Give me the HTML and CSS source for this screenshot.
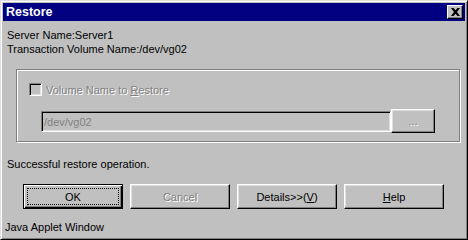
FILE: index.html
```html
<!DOCTYPE html>
<html>
<head>
<meta charset="utf-8">
<link rel="stylesheet" href="styles.css">
</head>
<body>
<div class="window">
  <div class="titlebar">
    <span class="title">Restore</span>
    <span class="close"><svg width="9" height="8" viewBox="0 0 9 8"><path d="M0 0h2.5l2 2.2 2-2.2H9L6 4l3 4H6.5l-2-2.2-2 2.2H0l3-4z" fill="#000"/></svg></span>
  </div>
  <div class="content">
    <div class="info">Server Name:Server1</div>
    <div class="info">Transaction Volume Name:/dev/vg02</div>
    <div class="group">
      <div class="check"><span class="box"></span><span class="dis">Volume Name to <u>R</u>estore</span></div>
      <div class="row">
        <div class="field">/dev/vg02</div>
        <div class="btn browse"><span class="dis">...</span></div>
      </div>
    </div>
    <div class="status">Successful restore operation.</div>
    <div class="buttons">
      <div class="btn push default"><span class="focus">OK</span></div>
      <div class="btn push"><span class="dis">Cancel</span></div>
      <div class="btn push">Details&gt;&gt;(<u>V</u>)</div>
      <div class="btn push"><u>H</u>elp</div>
    </div>
  </div>
  <div class="footer">Java Applet Window</div>
</div>
</body>
</html>
```

FILE: styles.css
```css
html, body { margin: 0; padding: 0; background: #c0c0c0; }
.window {
  width: 468px; height: 240px; box-sizing: border-box;
  border: 1px solid; border-color: #dfdfdf #000 #000 #dfdfdf;
  box-shadow: inset 1px 1px #fff, inset -1px -1px #808080;
  padding: 2px;
  background: #c0c0c0;
  font-family: "Liberation Sans", Arial, sans-serif; font-size: 11px; line-height: 14px; color: #000;
  display: flex; flex-direction: column;
}
.titlebar {
  height: 18px; background: #000080; color: #fff;
  display: flex; align-items: center; justify-content: space-between;
  padding: 0 2px 0 3px;
}
.title { font-weight: bold; font-size: 12.5px; }
.close {
  width: 16px; height: 14px; box-sizing: border-box; background: #c0c0c0;
  border: 1px solid; border-color: #fff #000 #000 #fff;
  box-shadow: inset -1px -1px #808080;
  display: flex; align-items: center; justify-content: center;
}
.content { padding: 7px 0 0 4px; flex: 1; display: flex; flex-direction: column; }
.info { height: 14px; }
.group {
  margin: 13px 0 0 9px; width: 444px; box-sizing: border-box; height: 73px;
  border: 1px solid #808080;
  box-shadow: inset 1px 1px #fff, 1px 1px #fff;
  padding: 13px 0 0 12px;
}
.check { display: flex; align-items: center; height: 13px; gap: 4px; }
.box {
  width: 13px; height: 13px; box-sizing: border-box; background: #c0c0c0;
  border: 1px solid; border-color: #808080 #fff #fff #808080;
  box-shadow: inset 1px 1px #000, inset -1px -1px #dfdfdf;
}
.dis { color: #808080; text-shadow: 1px 1px #fff; }
.row { display: flex; margin: 13px 0 0 12px; align-items: center; }
.field {
  width: 350px; height: 21px; box-sizing: border-box;
  border: 1px solid; border-color: #808080 #fff #fff #808080;
  box-shadow: inset 1px 1px #000, inset -1px -1px #dfdfdf;
  color: #808080; padding: 2px 0 0 2px; line-height: 16px;
}
.btn {
  box-sizing: border-box; background: #c0c0c0;
  border: 1px solid; border-color: #fff #000 #000 #fff;
  box-shadow: inset -1px -1px #808080, inset 1px 1px #dfdfdf;
  display: flex; align-items: center; justify-content: center;
}
.browse { width: 44px; height: 24px; }
.status { margin-top: 15px; height: 14px; }
.buttons { display: flex; gap: 7px; margin: 13px 0 0 16px; }
.push { width: 100px; height: 25px; }
.default {
  border: 1px solid #000;
  box-shadow: inset 1px 1px #fff, inset -1px -1px #000, inset -2px -2px #808080;
}
.focus {
  width: 92px; height: 17px; box-sizing: border-box; border: 1px dotted #000;
  display: flex; align-items: center; justify-content: center;
}
.footer { padding: 0 0 0 2px; height: 17px; line-height: 14px; }
```
